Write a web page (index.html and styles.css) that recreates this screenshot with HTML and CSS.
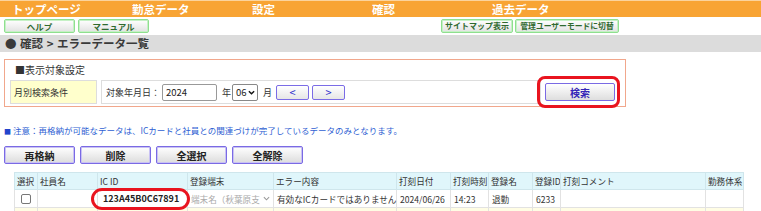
FILE: index.html
```html
<!DOCTYPE html>
<html lang="ja">
<head>
<meta charset="utf-8">
<title>エラーデータ一覧</title>
<link rel="stylesheet" href="styles.css">
</head>
<body>
<nav class="topnav">
  <a class="topnav-item">トップページ</a>
  <a class="topnav-item">勤怠データ</a>
  <a class="topnav-item">設定</a>
  <a class="topnav-item">確認</a>
  <a class="topnav-item">過去データ</a>
</nav>
<div class="subnav">
  <div class="subnav-group">
    <span class="gbtn w71">ヘルプ</span>
    <span class="gbtn w71">マニュアル</span>
  </div>
  <div class="subnav-group subnav-right">
    <span class="gbtn w72">サイトマップ表示</span>
    <span class="gbtn w104">管理ユーザーモードに切替</span>
  </div>
</div>
<div class="crumb">● 確認 &gt; エラーデータ一覧</div>

<div class="filter">
  <div class="filter-title">■表示対象設定</div>
  <div class="filter-row">
    <div class="filter-label">月別検索条件</div>
    <div class="filter-field">
      <span class="field-label">対象年月日：</span>
      <span class="year-input">2024</span>
      <span class="unit">年</span>
      <span class="month-select">06<svg class="chev" viewBox="0 0 8 5" width="7" height="5"><path d="M1 1 L4 4 L7 1" fill="none" stroke="#111" stroke-width="1.6"/></svg></span>
      <span class="unit unit-m">月</span>
      <span class="nav-btn">&lt;</span>
      <span class="nav-btn">&gt;</span>
    </div>
    <div class="filter-action">
      <span class="search-btn">検索<span class="hl hl-search"></span></span>
    </div>
  </div>
</div>

<p class="note"><span class="note-mark">■</span> 注意：再格納が可能なデータは、ICカードと社員との関連づけが完了しているデータのみとなります。</p>

<div class="actions">
  <span class="pbtn">再格納</span>
  <span class="pbtn">削除</span>
  <span class="pbtn">全選択</span>
  <span class="pbtn">全解除</span>
</div>

<table class="grid">
  <colgroup>
    <col style="width:23px"><col style="width:60px"><col style="width:90px"><col style="width:86px">
    <col style="width:123px"><col style="width:54px"><col style="width:38px"><col style="width:44px">
    <col style="width:28px"><col style="width:145px"><col style="width:38px">
  </colgroup>
  <thead>
    <tr>
      <th>選択</th><th>社員名</th><th>IC ID</th><th>登録端末</th><th>エラー内容</th><th>打刻日付</th><th>打刻時刻</th><th>登録名</th><th>登録ID</th><th>打刻コメント</th><th>勤務体系</th>
    </tr>
  </thead>
  <tbody>
    <tr>
      <td class="c"><input type="checkbox" class="chk"></td>
      <td></td>
      <td class="icid">123A45B0C67891<span class="hl hl-icid"></span></td>
      <td class="term"><span class="term-sel"><span class="term-text">端末名（秋葉原支</span><svg class="chev" viewBox="0 0 8 5" width="7" height="5"><path d="M1 1 L4 4 L7 1" fill="none" stroke="#999" stroke-width="1.2"/></svg></span></td>
      <td>有効なICカードではありません</td>
      <td>2024/06/26</td>
      <td>14:23</td>
      <td>退勤</td>
      <td>6233</td>
      <td></td>
      <td></td>
    </tr>
    <tr class="alt">
      <td></td><td></td><td></td><td></td><td></td><td></td><td></td><td></td><td></td><td></td><td></td>
    </tr>
  </tbody>
</table>
</body>
</html>
```

FILE: styles.css
```css
* { box-sizing: border-box; }
html, body { margin: 0; padding: 0; }
body {
  width: 761px;
  height: 211px;
  overflow: hidden;
  background: #fff;
  color: #333;
  font-family: "Noto Sans CJK JP", "Noto Sans", sans-serif;
  font-size: 9px;
}

/* top navigation */
.topnav {
  display: flex;
  height: 17px;
  background: #f8a434;
  border-top: 1px solid #fbd39c;
}
.topnav-item {
  width: 120px;
  padding-left: 12px;
  color: #fff;
  font-weight: bold;
  font-size: 11.5px;
  line-height: 17px;
}

/* sub navigation */
.subnav {
  display: flex;
  margin-top: 2px;
  height: 14px;
  padding-left: 4px;
}
.subnav-group { display: flex; gap: 3px; }
.subnav-right { margin-left: 292px; gap: 2px; }
.gbtn {
  display: flex;
  align-items: center;
  justify-content: center;
  height: 14px;
  border: 1px solid #8fdf8f;
  box-shadow: inset 0 0 0 1px #c6f1c6;
  border-radius: 2px;
  background: linear-gradient(#ffffff, #e2e2e2);
  font-size: 8.5px;
  font-weight: bold;
  color: #2f6a2f;
  line-height: 1;
  white-space: nowrap;
}
.w71 { width: 71px; }
.w72 { width: 72px; font-size: 8px; }
.w104 { width: 104px; font-size: 7.8px; }

/* breadcrumb */
.crumb {
  margin-top: 2px;
  height: 17px;
  background: #dcdcdc;
  padding-left: 5px;
  font-size: 11.5px;
  font-weight: bold;
  line-height: 17px;
  color: #3a3a3a;
  word-spacing: 1px;
}

/* filter box */
.filter {
  margin: 7px 0 0 4px;
  width: 622px;
  height: 48px;
  border: 1px solid #f1a78c;
  padding: 0 5px;
}
.filter-title {
  height: 20px;
  line-height: 20px;
  font-size: 10px;
  padding-left: 5px;
  color: #333;
}
.filter-row {
  display: flex;
  height: 24px;
}
.filter-label {
  width: 87px;
  background: #ffffcc;
  border: 1px solid #dddddd;
  display: flex;
  align-items: center;
  padding-left: 3px;
  font-size: 9px;
}
.filter-field {
  margin-left: 4px;
  width: 440px;
  border: 1px solid #dddddd;
  display: flex;
  align-items: center;
  padding-left: 4px;
  font-size: 9px;
}
.field-label { width: 56px; }
.year-input {
  width: 55px;
  height: 17px;
  border: 1px solid #999;
  border-radius: 2px;
  padding-left: 3px;
  line-height: 15px;
  font-size: 9.5px;
  color: #222;
}
.unit { margin-left: 5px; width: 10px; }
.unit-m { margin-left: 5px; }
.month-select {
  display: flex;
  align-items: center;
  justify-content: space-between;
  width: 26px;
  height: 17px;
  border: 1px solid #888;
  border-radius: 2px;
  padding: 0 2px 0 3px;
  font-size: 9.5px;
  color: #222;
}
.chev { display: block; }
.nav-btn {
  display: flex;
  align-items: center;
  justify-content: center;
  width: 33px;
  height: 15px;
  margin-left: 3px;
  border: 1px solid #7b6ce6;
  border-radius: 2px;
  background: linear-gradient(#ffffff, #e6e6e6);
  color: #2e2ecc;
  font-size: 11px;
  line-height: 1;
}
.filter-action {
  flex: 1;
  display: flex;
  align-items: center;
  padding-left: 4px;
}
.search-btn {
  position: relative;
  display: flex;
  align-items: center;
  justify-content: center;
  width: 70px;
  height: 18px;
  border: 1px solid #7a6ae4;
  border-radius: 2px;
  background: linear-gradient(#ffffff, #dedede);
  color: #3526b8;
  font-size: 10px;
  font-weight: bold;
}

/* red highlight rings (overlays) */
.hl {
  position: absolute;
  border: 3px solid #e9141f;
  pointer-events: none;
}
.hl-search {
  left: -9px;
  right: -6px;
  top: -8px;
  bottom: -8px;
  border-radius: 8px;
}
.hl-icid {
  left: -7px;
  right: -3px;
  top: -2px;
  bottom: -3px;
  border-radius: 11px;
}

/* note */
.note {
  margin: 17px 0 0 0;
  padding-left: 4px;
  height: 12px;
  line-height: 12px;
  font-size: 8.5px;
  color: #2f5fd3;
}
.note-mark { font-size: 7px; color: #2244cc; }

/* action buttons */
.actions {
  display: flex;
  gap: 5px;
  margin: 10px 0 0 4px;
}
.pbtn {
  display: flex;
  align-items: center;
  justify-content: center;
  width: 71px;
  height: 18px;
  border: 1px solid #7a6ae4;
  box-shadow: inset 0 0 0 1px #c9c2f4;
  border-radius: 2px;
  background: linear-gradient(#ffffff, #dcdcdc);
  color: #222;
  font-size: 10px;
  font-weight: bold;
}

/* table */
.grid {
  margin: 8px 0 0 14px;
  width: 729px;
  border-collapse: collapse;
  table-layout: fixed;
  font-size: 8.6px;
}
.grid th {
  height: 17px;
  padding: 0 2px;
  background: #e0f6fb;
  border: 1px solid #cfe6ec;
  font-weight: normal;
  text-align: left;
  color: #333;
  white-space: nowrap;
  overflow: hidden;
}
.grid td {
  height: 18px;
  padding: 0 2px 0 3px;
  border: 1px solid #e2e2e2;
  white-space: nowrap;
  color: #333;
}
.grid td.c { text-align: center; padding: 0; }
.grid tr.alt td { background: #fffde4; }
.chk {
  appearance: none;
  -webkit-appearance: none;
  display: block;
  margin: 0 auto;
  width: 10px;
  height: 10px;
  border: 1px solid #777;
  border-radius: 2px;
  background: #fff;
}
.grid td.icid {
  position: relative;
  padding-left: 5px;
  font-weight: bold;
  font-size: 9px;
  color: #222;
}
.grid td.term { padding: 0 3px; }
.term-sel {
  display: flex;
  align-items: center;
  justify-content: space-between;
  color: #aaa;
}
.term-text { white-space: nowrap; }
```
